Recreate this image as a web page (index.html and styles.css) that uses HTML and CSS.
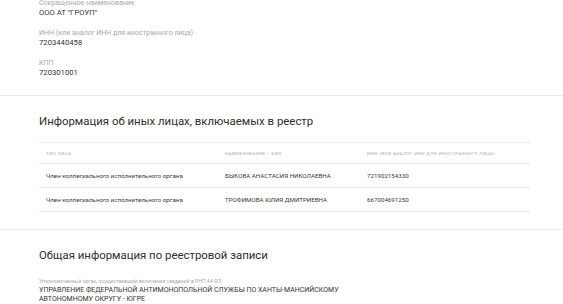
FILE: index.html
```html
<!DOCTYPE html>
<html lang="ru">
<head>
    <meta charset="UTF-8">
    <meta name="viewport" content="width=device-width, initial-scale=1.0">
    <title>Реестровая запись</title>
    <link rel="stylesheet" href="styles.css">
</head>
<body>
    <section class="block block-top">
        <div class="field">
            <div class="field-label">Сокращенное наименование</div>
            <div class="field-value">ООО АТ "ГРОУП"</div>
        </div>
        <div class="field">
            <div class="field-label">ИНН (или аналог ИНН для иностранного лица)</div>
            <div class="field-value">7203440458</div>
        </div>
        <div class="field">
            <div class="field-label">КПП</div>
            <div class="field-value">720301001</div>
        </div>
    </section>

    <section class="block">
        <h2>Информация об иных лицах, включаемых в реестр</h2>
        <div class="table">
            <div class="row head">
                <div class="cell">Тип лица</div>
                <div class="cell">Наименование / ФИО</div>
                <div class="cell">ИНН (или аналог ИНН для иностранного лица)</div>
            </div>
            <div class="row">
                <div class="cell">Член коллегиального исполнительного органа</div>
                <div class="cell">БЫКОВА АНАСТАСИЯ НИКОЛАЕВНА</div>
                <div class="cell">721902154330</div>
            </div>
            <div class="row">
                <div class="cell">Член коллегиального исполнительного органа</div>
                <div class="cell">ТРОФИМОВА ЮЛИЯ ДМИТРИЕВНА</div>
                <div class="cell">667004691250</div>
            </div>
        </div>
    </section>

    <section class="block">
        <h2>Общая информация по реестровой записи</h2>
        <div class="field field-wide">
            <div class="field-label small">Уполномоченный орган, осуществивший включение сведений в РНП 44-ФЗ</div>
            <div class="field-value">УПРАВЛЕНИЕ ФЕДЕРАЛЬНОЙ АНТИМОНОПОЛЬНОЙ СЛУЖБЫ ПО ХАНТЫ-МАНСИЙСКОМУ АВТОНОМНОМУ ОКРУГУ - ЮГРЕ</div>
        </div>
    </section>
</body>
</html>
```

FILE: styles.css
```css
:root {
    --text-color: #333333;
    --muted-color: #a9a9a9;
    --line-color: #ececec;
}
body {
    margin: 0;
    font-family: Roboto, 'Liberation Sans', sans-serif;
    color: var(--text-color);
    background: #ffffff;
    overflow: hidden;
}
.block {
    padding: 17px 39px 17px;
    border-bottom: 1px solid var(--line-color);
}
.block-top {
    margin-top: -1px;
    padding-top: 0;
    padding-bottom: 6px;
}
.field {
    margin-bottom: 11px;
}
.field-label {
    font-size: 7px;
    line-height: 8px;
    color: var(--muted-color);
}
.field-label.small {
    font-size: 5.1px;
    line-height: 7px;
}
.field-value {
    margin-top: 1px;
    font-size: 7.7px;
    line-height: 10px;
}
.field-wide {
    max-width: 310px;
    margin-top: 15px;
}
.field-wide .field-value {
    font-size: 7px;
    line-height: 9px;
}
h2 {
    margin: 0;
    font-size: 11.4px;
    line-height: 16px;
    font-weight: 400;
    color: #2e2e2e;
}
.table {
    margin-top: 13px;
    width: 492px;
    border-top: 1px solid var(--line-color);
}
.row {
    display: grid;
    grid-template-columns: 179px 142px 1fr;
    align-items: center;
    height: 23px;
    border-bottom: 1px solid var(--line-color);
    font-size: 6.2px;
    color: #3a3a3a;
}
.row.head {
    height: 20px;
    font-size: 4.3px;
    letter-spacing: 0.45px;
    text-transform: uppercase;
    color: var(--muted-color);
}
.cell {
    padding-left: 7px;
}
```
